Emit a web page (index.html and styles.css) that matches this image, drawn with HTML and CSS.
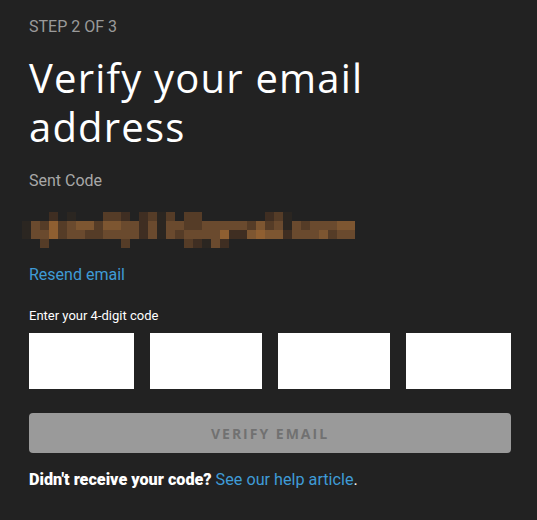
FILE: index.html
```html
<!DOCTYPE html>
<html>
<head>
<meta charset="utf-8">
<link rel="stylesheet" href="styles.css">
</head>
<body>
<main class="panel">
  <div class="step">STEP 2 OF 3</div>
  <h1 class="title">Verify your email address</h1>
  <div class="label">Sent Code</div>
  <svg class="email" viewBox="0 0 37 4" width="333" height="36" preserveAspectRatio="none" shape-rendering="crispEdges">
    <g fill="#3f2e22"><rect x="3" y="0" width="1" height="1"/><rect x="11" y="0" width="1" height="1"/><rect x="13" y="0" width="1" height="1"/><rect x="27" y="0" width="1" height="1"/><rect x="19" y="3" width="1" height="1"/><rect x="22" y="3" width="1" height="1"/><rect x="13" y="1" width="1" height="2"/><rect x="23" y="2" width="2" height="1"/><rect x="29" y="2" width="1" height="1"/></g>
    <g fill="#2b2621"><rect x="5" y="0" width="1" height="1"/><rect x="15" y="0" width="1" height="1"/><rect x="29" y="0" width="1" height="1"/><rect x="20" y="3" width="1" height="1"/><rect x="0" y="1" width="1" height="2"/><rect x="15" y="1" width="1" height="2"/><rect x="29" y="1" width="1" height="1"/></g>
    <g fill="#553c27"><rect x="9" y="0" width="2" height="1"/><rect x="14" y="0" width="1" height="1"/><rect x="16" y="0" width="1" height="1"/><rect x="18" y="0" width="2" height="1"/><rect x="28" y="0" width="1" height="1"/><rect x="2" y="3" width="1" height="1"/><rect x="11" y="3" width="1" height="1"/><rect x="18" y="3" width="1" height="1"/>
      <rect x="2" y="1" width="1" height="1"/><rect x="4" y="1" width="1" height="2"/><rect x="8" y="1" width="1" height="2"/><rect x="7" y="2" width="1" height="1"/><rect x="17" y="2" width="1" height="1"/><rect x="18" y="1" width="2" height="1"/><rect x="25" y="1" width="1" height="1"/><rect x="27" y="1" width="1" height="1"/><rect x="31" y="1" width="1" height="1"/><rect x="34" y="2" width="1" height="1"/></g>
    <g fill="#6a4a2e"><rect x="21" y="3" width="1" height="1"/>
      <rect x="1" y="1" width="1" height="2"/><rect x="2" y="2" width="1" height="1"/><rect x="5" y="1" width="1" height="2"/><rect x="6" y="2" width="1" height="1"/><rect x="9" y="2" width="4" height="1"/><rect x="11" y="1" width="2" height="1"/><rect x="14" y="1" width="1" height="2"/><rect x="16" y="1" width="1" height="2"/><rect x="17" y="1" width="1" height="1"/><rect x="18" y="2" width="4" height="1"/><rect x="20" y="1" width="5" height="1"/><rect x="28" y="1" width="1" height="1"/><rect x="30" y="1" width="1" height="2"/><rect x="31" y="2" width="2" height="1"/><rect x="32" y="1" width="3" height="1"/><rect x="35" y="2" width="2" height="1"/></g>
    <g fill="#7d5631"><rect x="6" y="1" width="2" height="1"/><rect x="9" y="1" width="2" height="1"/><rect x="26" y="1" width="1" height="1"/><rect x="25" y="2" width="1" height="1"/><rect x="27" y="2" width="2" height="1"/><rect x="33" y="2" width="1" height="1"/><rect x="35" y="1" width="2" height="1"/></g>
    <g fill="#8f5f31"><rect x="3" y="1" width="1" height="2"/><rect x="22" y="2" width="1" height="1"/><rect x="26" y="2" width="1" height="1"/></g>
  </svg>
  <a class="link resend" href="#">Resend email</a>
  <div class="code-label">Enter your 4-digit code</div>
  <div class="code-row">
    <input class="code-box" type="text" maxlength="1">
    <input class="code-box" type="text" maxlength="1">
    <input class="code-box" type="text" maxlength="1">
    <input class="code-box" type="text" maxlength="1">
  </div>
  <button class="verify" disabled>VERIFY EMAIL</button>
  <p class="help"><strong>Didn't receive your code?</strong> <a class="link" href="#">See our help article</a>.</p>
</main>
</body>
</html>
```
FILE: styles.css
```css
html, body {
  margin: 0;
  background: #222222;
}
.panel {
  display: flex;
  flex-direction: column;
  align-items: flex-start;
  padding: 17px 26px 0 29px;
  font-family: Roboto, "Liberation Sans", sans-serif;
  color: #ffffff;
}
.step {
  font-size: 16px;
  line-height: 19px;
  color: #9a9a9a;
}
.title {
  margin: 17px 0 0;
  font-family: "Open Sans", "DejaVu Sans", sans-serif;
  font-weight: 400;
  font-size: 40px;
  line-height: 49px;
  letter-spacing: 1.2px;
  color: #ffffff;
  max-width: 380px;
}
.label {
  margin-top: 20px;
  font-size: 16px;
  line-height: 19px;
  color: #a8a8a8;
}
.email {
  display: block;
  margin: 22px 0 0 -7px;
}
.link {
  color: #3f9bd6;
  text-decoration: none;
}
.resend {
  margin-top: 17px;
  font-size: 16px;
  line-height: 19px;
}
.code-label {
  margin-top: 24px;
  font-size: 13px;
  line-height: 15px;
  color: #ffffff;
}
.code-row {
  align-self: stretch;
  margin-top: 10px;
  display: grid;
  grid-template-columns: 105px 112px 112px 105px;
  justify-content: space-between;
}
.code-box {
  box-sizing: border-box;
  height: 56px;
  border: 0;
  margin: 0;
  padding: 0;
  background: #ffffff;
  width: 100%;
}
.verify {
  align-self: stretch;
  margin-top: 24px;
  height: 40px;
  border: 0;
  border-radius: 4px;
  background: #9a9a9a;
  color: #717171;
  font-family: "Open Sans", sans-serif;
  font-weight: 700;
  font-size: 14px;
  letter-spacing: 2px;
}
.help {
  margin: 17px 0 0;
  font-size: 16.2px;
  line-height: 19px;
  color: #ffffff;
}
.help strong {
  font-weight: 900;
}
```
